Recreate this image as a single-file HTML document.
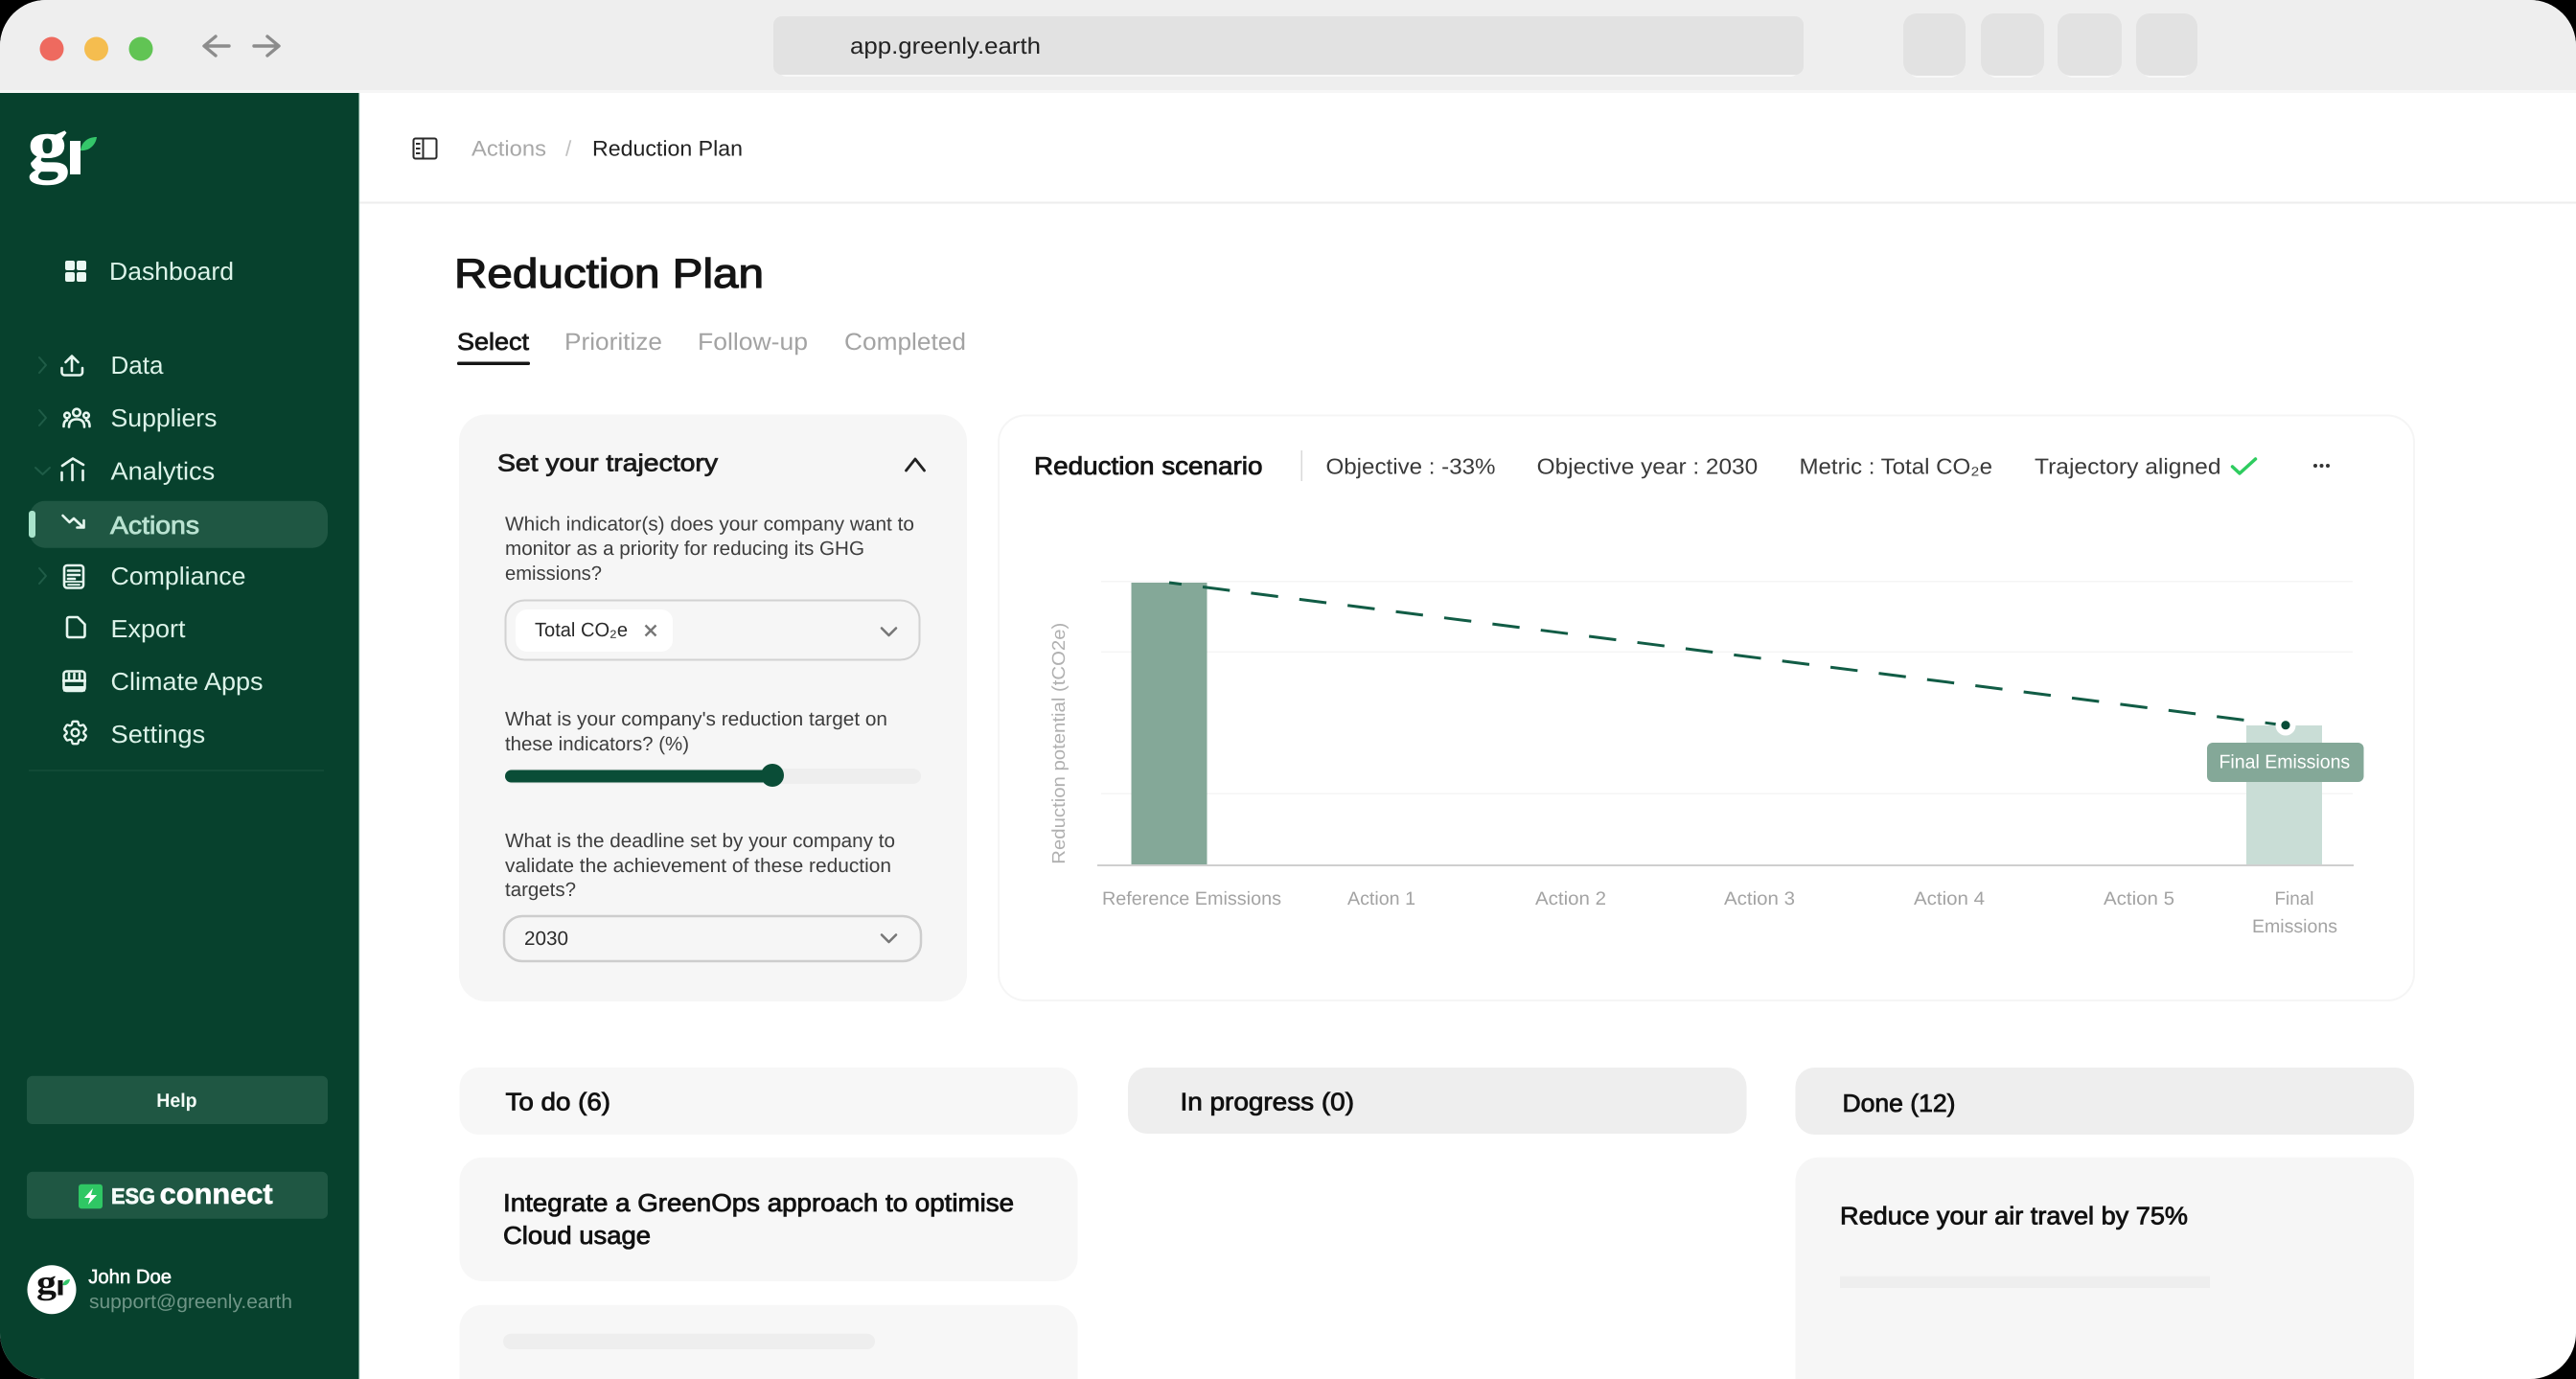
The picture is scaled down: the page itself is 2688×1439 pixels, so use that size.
<!DOCTYPE html>
<html lang="en">
<head>
<meta charset="utf-8">
<title>Reduction Plan</title>
<style>
html,body{margin:0;padding:0;background:#000;width:2688px;height:1439px;overflow:hidden}
svg{display:block;font-family:"Liberation Sans",Arial,sans-serif;text-rendering:geometricPrecision}
.nav{font-size:26px;fill:#dcf3e9}
.q{font-size:20.5px;fill:#3d3d3d}
.hd{font-size:23px;fill:#3a3a3a}
.xl{font-size:19.5px;fill:#a3a3a3}
.k{font-size:26px;fill:#111;stroke:#111;stroke-width:.8px}
.ic{fill:none;stroke:#e6f6ef;stroke-width:2.6;stroke-linecap:round;stroke-linejoin:round}
.chev{fill:none;stroke:#1f5c47;stroke-width:2;stroke-linecap:round;stroke-linejoin:round}
.sc{fill:none;stroke:#777;stroke-width:2.6;stroke-linecap:round;stroke-linejoin:round}
</style>
</head>
<body>
<svg width="2688" height="1439" viewBox="0 0 2688 1439" xmlns="http://www.w3.org/2000/svg">
<defs><clipPath id="win"><rect x="0" y="0" width="2688" height="1439" rx="48" ry="48"/></clipPath></defs>
<rect width="2688" height="1439" fill="#000"/>
<g clip-path="url(#win)">
<rect width="2688" height="1439" fill="#fff"/>

<!-- browser chrome -->
<rect width="2688" height="94" fill="#eeeeee"/>
<rect y="94" width="2688" height="3" fill="#f6f6f6"/>
<circle cx="54" cy="51" r="12.5" fill="#ee6a5f"/>
<circle cx="100.5" cy="51" r="12.5" fill="#f5bd4f"/>
<circle cx="147" cy="51" r="12.5" fill="#61c454"/>
<path d="M239 48H214M225 38L213 48L225 58" fill="none" stroke="#8c8c8c" stroke-width="3.4" stroke-linecap="round" stroke-linejoin="round"/>
<path d="M265 48H290M279 38L291 48L279 58" fill="none" stroke="#8c8c8c" stroke-width="3.4" stroke-linecap="round" stroke-linejoin="round"/>
<rect x="812" y="18" width="1065" height="62" rx="9" fill="#f8f8f8"/>
<rect x="807" y="17" width="1075" height="61" rx="9" fill="#e2e2e2"/>
<text x="887" y="56" font-size="24" fill="#222" textLength="199" lengthAdjust="spacingAndGlyphs">app.greenly.earth</text>
<rect x="1992" y="15" width="53" height="66" rx="10" fill="#f8f8f8"/>
<rect x="1986" y="14" width="65" height="65" rx="14" fill="#e2e2e2"/>
<rect x="2073" y="15" width="54" height="66" rx="10" fill="#f8f8f8"/>
<rect x="2067" y="14" width="66" height="65" rx="14" fill="#e2e2e2"/>
<rect x="2153" y="15" width="55" height="66" rx="10" fill="#f8f8f8"/>
<rect x="2147" y="14" width="67" height="65" rx="14" fill="#e2e2e2"/>
<rect x="2235" y="15" width="52" height="66" rx="10" fill="#f8f8f8"/>
<rect x="2229" y="14" width="64" height="65" rx="14" fill="#e2e2e2"/>

<!-- sidebar -->
<rect x="0" y="97" width="374.5" height="1342" fill="#07412d"/>
<rect x="374.5" y="97" width="1" height="1342" fill="#cfe8dd"/>

<!-- logo -->
<text x="29" y="176" font-family="'Liberation Serif',serif" font-weight="700" font-size="76" fill="#fff" stroke="#fff" stroke-width="1" textLength="42" lengthAdjust="spacingAndGlyphs">g</text>
<rect x="73" y="147" width="11" height="35" fill="#fff"/>
<path d="M84 157C85 148 92 143 101 143C100 151 93 158 84 157Z" fill="#34c66a"/>

<!-- nav -->
<rect x="68" y="272" width="10" height="10" rx="2" fill="#eaf8f2"/>
<rect x="80" y="272" width="10" height="10" rx="2" fill="#eaf8f2"/>
<rect x="68" y="284" width="10" height="10" rx="2" fill="#eaf8f2"/>
<rect x="80" y="284" width="10" height="10" rx="2" fill="#eaf8f2"/>
<text class="nav" x="114" y="292" textLength="130" lengthAdjust="spacingAndGlyphs">Dashboard</text>

<path class="chev" d="M41 373L48 381L41 389"/>
<path class="chev" d="M41 428L48 436L41 444"/>
<path class="chev" d="M37 488L44.500 495L52 488"/>
<path class="chev" d="M41 593L48 601L41 609"/>

<path class="ic" d="M75 387V372M68.500 378L75 371.500L81.500 378M64.500 384V388.500A3 3 0 0 0 67.500 391.500H83A3 3 0 0 0 86 388.500V384" stroke-width="2.8"/>
<text class="nav" x="115.500" y="390" textLength="55" lengthAdjust="spacingAndGlyphs">Data</text>

<g class="ic" stroke-width="2.1">
<circle cx="80" cy="430.500" r="3.800"/><circle cx="70" cy="433.500" r="2.800"/><circle cx="90" cy="433.500" r="2.800"/>
<path d="M72 445.500Q72 437.500 80 437.500Q88 437.500 88 445.500"/>
<path d="M66.500 445Q66.500 439 70 438.500M93.500 445Q93.500 439 90 438.500"/>
</g>
<text class="nav" x="115.500" y="445" textLength="111" lengthAdjust="spacingAndGlyphs">Suppliers</text>

<g class="ic" stroke-width="2.700">
<path d="M65 486L76 478.500L87 485"/>
<path d="M64.500 493V501M75.500 485V501M86.500 491V501"/>
</g>
<text class="nav" x="115.500" y="500.700" textLength="108.700" lengthAdjust="spacingAndGlyphs">Analytics</text>

<rect x="31" y="522.700" width="311" height="49" rx="16" fill="#1f5743"/>
<rect x="30" y="533" width="7" height="28" rx="3" fill="#a8e3cb"/>
<path class="ic" d="M65.500 538L72.500 545L77 541L86 549.500M87.500 543V550.500H80.500" stroke-width="2.800"/>
<text x="115" y="557" font-size="26" fill="#b9e2d1" stroke="#b9e2d1" stroke-width=".8" textLength="93" lengthAdjust="spacingAndGlyphs">Actions</text>

<g class="ic" stroke-width="2.400">
<rect x="67" y="590" width="20" height="23.500" rx="3"/>
<path d="M71 595.500H83M71 600H83M71 604H78"/>
<path d="M67 607H87M71 610.200H83" stroke-width="1.800"/>
</g>
<text class="nav" x="115.500" y="610" textLength="141" lengthAdjust="spacingAndGlyphs">Compliance</text>

<path class="ic" d="M70 646A2 2 0 0 1 72 644H81L88.500 651.500V663A2 2 0 0 1 86.500 665H72A2 2 0 0 1 70 663Z"/>
<text class="nav" x="115.500" y="665" textLength="78" lengthAdjust="spacingAndGlyphs">Export</text>

<g class="ic" stroke-width="2.600">
<rect x="66.500" y="700.500" width="22" height="20.500" rx="3"/>
<path d="M72 703V708M77.500 703V708M83 703V708"/>
</g>
<rect x="65" y="709" width="25" height="2.800" fill="#e6f6ef"/>
<rect x="66" y="716" width="23" height="5.500" fill="#e6f6ef"/>
<text class="nav" x="115.500" y="720" textLength="159" lengthAdjust="spacingAndGlyphs">Climate Apps</text>

<g transform="translate(62.900 748.900) scale(1.300)" fill="none" stroke="#e6f6ef" stroke-width="1.800" stroke-linejoin="round">
<path d="M9.594 3.94c.09-.542.56-.94 1.11-.94h2.593c.55 0 1.02.398 1.11.94l.213 1.281c.063.374.313.686.645.87.074.04.147.083.22.127.325.196.72.257 1.075.124l1.217-.456a1.125 1.125 0 011.37.49l1.296 2.247a1.125 1.125 0 01-.26 1.431l-1.003.827c-.293.24-.438.613-.431.992a6.759 6.759 0 010 .255c-.007.378.138.75.43.99l1.005.828c.424.35.534.954.26 1.43l-1.298 2.247a1.125 1.125 0 01-1.369.491l-1.217-.456c-.355-.133-.75-.072-1.076.124a6.57 6.57 0 01-.22.128c-.331.183-.581.495-.644.869l-.213 1.28c-.09.543-.56.941-1.11.941h-2.594c-.55 0-1.02-.398-1.11-.94l-.213-1.281c-.062-.374-.312-.686-.644-.87a6.52 6.52 0 01-.22-.127c-.325-.196-.72-.257-1.076-.124l-1.217.456a1.125 1.125 0 01-1.369-.49l-1.297-2.247a1.125 1.125 0 01.26-1.431l1.004-.827c.292-.24.437-.613.43-.992a6.932 6.932 0 010-.255c.007-.378-.138-.75-.43-.99l-1.004-.828a1.125 1.125 0 01-.26-1.43l1.297-2.247a1.125 1.125 0 011.37-.491l1.216.456c.356.133.751.072 1.076-.124.072-.044.146-.087.22-.128.332-.183.582-.495.644-.869l.214-1.281z"/>
<circle cx="12" cy="12" r="3"/>
</g>
<text class="nav" x="115.500" y="775" textLength="98.700" lengthAdjust="spacingAndGlyphs">Settings</text>

<rect x="30" y="803" width="308" height="2" fill="#114a36"/>

<!-- help -->
<rect x="28" y="1122.700" width="314" height="50.300" rx="6" fill="#1f5743"/>
<text x="163.300" y="1155" font-size="20" font-weight="700" fill="#f2faf6" textLength="42.300" lengthAdjust="spacingAndGlyphs">Help</text>

<!-- esg -->
<rect x="28" y="1222.700" width="314" height="49" rx="6" fill="#1f5743"/>
<rect x="82" y="1235.700" width="25" height="25.500" rx="3" fill="#2fc764"/>
<polygon points="97,1240 88,1250 94,1250 92,1257 101,1247 95,1247" fill="#fff"/>
<text x="116" y="1256" font-size="23" font-weight="700" fill="#f4fbf8" stroke="#f4fbf8" stroke-width=".7" textLength="46" lengthAdjust="spacingAndGlyphs">ESG</text>
<text x="166.700" y="1256" font-size="30" font-weight="700" fill="#fff" stroke="#fff" stroke-width=".6" textLength="118" lengthAdjust="spacingAndGlyphs">connect</text>

<!-- user -->
<circle cx="54" cy="1345.700" r="25.500" fill="#fff"/>
<text x="38" y="1349.500" font-family="'Liberation Serif',serif" font-weight="700" font-size="35" fill="#111" textLength="21" lengthAdjust="spacingAndGlyphs">g</text>
<rect x="60.500" y="1336" width="5" height="15.500" fill="#111"/>
<path d="M65.500 1341C66 1337 69 1335 73 1335C72.500 1339 69.500 1342 65.500 1341Z" fill="#34c66a"/>
<text x="92.300" y="1339" font-size="20.500" fill="#fff" stroke="#fff" stroke-width=".55" textLength="86.700" lengthAdjust="spacingAndGlyphs">John Doe</text>
<text x="93" y="1365" font-size="20.500" fill="#6f9687" textLength="212" lengthAdjust="spacingAndGlyphs">support@greenly.earth</text>

<!-- top bar -->
<rect x="375.500" y="210.500" width="2313" height="2" fill="#ededed"/>
<g fill="none" stroke="#2a2a2a" stroke-width="2">
<rect x="431.500" y="144.500" width="24" height="21" rx="2"/>
<path d="M441.500 144.500V165.500"/>
<path d="M434 150H438.500M434 155H438.500M434 160H438.500"/>
</g>
<text x="492" y="162.500" font-size="22.500" fill="#a8a8a8" textLength="78" lengthAdjust="spacingAndGlyphs">Actions</text>
<text x="590" y="162.500" font-size="22.500" fill="#c0c0c0">/</text>
<text x="618" y="162.500" font-size="22.500" fill="#222" textLength="157" lengthAdjust="spacingAndGlyphs">Reduction Plan</text>

<!-- title -->
<text x="474" y="300" font-size="43" fill="#141414" stroke="#141414" stroke-width="1.2" textLength="323" lengthAdjust="spacingAndGlyphs">Reduction Plan</text>

<!-- tabs -->
<text x="477" y="365" font-size="25" fill="#161616" stroke="#161616" stroke-width=".75" textLength="75" lengthAdjust="spacingAndGlyphs">Select</text>
<rect x="477" y="377.500" width="76" height="3.500" rx="1.500" fill="#161616"/>
<text x="589" y="365" font-size="25" fill="#a3a3a3" textLength="102" lengthAdjust="spacingAndGlyphs">Prioritize</text>
<text x="728" y="365" font-size="25" fill="#a3a3a3" textLength="115" lengthAdjust="spacingAndGlyphs">Follow-up</text>
<text x="881" y="365" font-size="25" fill="#a3a3a3" textLength="127" lengthAdjust="spacingAndGlyphs">Completed</text>

<!-- left panel -->
<rect x="479" y="432.500" width="530" height="612.500" rx="28" fill="#f6f6f6"/>
<text x="519" y="491.700" font-size="25" fill="#1a1a1a" stroke="#1a1a1a" stroke-width=".8" textLength="230" lengthAdjust="spacingAndGlyphs">Set your trajectory</text>
<path d="M945.500 491L955 479L964.500 491" fill="none" stroke="#222" stroke-width="2.800" stroke-linecap="round" stroke-linejoin="round"/>

<text class="q" x="527" y="553.600" textLength="427" lengthAdjust="spacingAndGlyphs">Which indicator(s) does your company want to</text>
<text class="q" x="527" y="579" textLength="375" lengthAdjust="spacingAndGlyphs">monitor as a priority for reducing its GHG</text>
<text class="q" x="527" y="605" textLength="101" lengthAdjust="spacingAndGlyphs">emissions?</text>

<rect x="527.500" y="626.500" width="432" height="62" rx="20" fill="#f6f6f6" stroke="#d2d2d2" stroke-width="2"/>
<rect x="538" y="636" width="164" height="44" rx="12" fill="#fff"/>
<text x="558" y="664" font-size="20.500" fill="#2a2a2a" textLength="97" lengthAdjust="spacingAndGlyphs">Total CO₂e</text>
<path d="M673.500 652.500L684.500 663.500M684.500 652.500L673.500 663.500" fill="none" stroke="#777" stroke-width="2.400"/>
<path class="sc" d="M920 655.500L927.500 663L935 655.500"/>

<text class="q" x="527" y="757" textLength="399" lengthAdjust="spacingAndGlyphs">What is your company's reduction target on</text>
<text class="q" x="527" y="783" textLength="192" lengthAdjust="spacingAndGlyphs">these indicators? (%)</text>

<rect x="527" y="802" width="434" height="16" rx="8" fill="#eeeeee"/>
<rect x="527" y="803.500" width="285" height="13" rx="6.500" fill="#0a4d37"/>
<circle cx="806" cy="809" r="12" fill="#0a4d37"/>

<text class="q" x="527" y="884" textLength="407" lengthAdjust="spacingAndGlyphs">What is the deadline set by your company to</text>
<text class="q" x="527" y="910" textLength="403" lengthAdjust="spacingAndGlyphs">validate the achievement of these reduction</text>
<text class="q" x="527" y="935" textLength="74" lengthAdjust="spacingAndGlyphs">targets?</text>

<rect x="526" y="956" width="435" height="47" rx="19" fill="#f6f6f6" stroke="#cdcdcd" stroke-width="2.500"/>
<text x="547" y="986" font-size="20.500" fill="#2a2a2a" textLength="46" lengthAdjust="spacingAndGlyphs">2030</text>
<path class="sc" d="M920 975.500L927.500 983L935 975.500"/>

<!-- right panel -->
<rect x="1042" y="433.500" width="1477" height="610.500" rx="28" fill="#fff" stroke="#f5f5f5" stroke-width="2"/>
<text x="1079" y="495" font-size="26" fill="#141414" stroke="#141414" stroke-width=".8" textLength="238.500" lengthAdjust="spacingAndGlyphs">Reduction scenario</text>
<rect x="1357.500" y="470" width="1.500" height="32" fill="#d9d9d9"/>
<text class="hd" x="1383.500" y="494.500" textLength="177" lengthAdjust="spacingAndGlyphs">Objective : -33%</text>
<text class="hd" x="1603.600" y="494.500" textLength="230.600" lengthAdjust="spacingAndGlyphs">Objective year : 2030</text>
<text class="hd" x="1877.500" y="494.500" textLength="201.500" lengthAdjust="spacingAndGlyphs">Metric : Total CO₂e</text>
<text class="hd" x="2123" y="494.500" textLength="194.500" lengthAdjust="spacingAndGlyphs">Trajectory aligned</text>
<path d="M2329.500 487L2337 494L2353.500 479" fill="none" stroke="#2ecc5f" stroke-width="3.500" stroke-linecap="round" stroke-linejoin="round"/>
<circle cx="2416" cy="486" r="2" fill="#333"/><circle cx="2422.500" cy="486" r="2" fill="#333"/><circle cx="2429" cy="486" r="2" fill="#333"/>

<!-- chart -->
<rect x="1149" y="606" width="1306" height="1.500" fill="#f5f5f5"/>
<rect x="1149" y="679.500" width="1306" height="1.500" fill="#f5f5f5"/>
<rect x="1149" y="827.500" width="1306" height="1.500" fill="#f5f5f5"/>
<rect x="1180.500" y="608" width="79" height="295" fill="#84a898"/>
<rect x="2344" y="757" width="79" height="146" fill="#c9ddd6"/>
<rect x="1145" y="902" width="1311" height="2" fill="#cfcfcf"/>
<text transform="rotate(-90 1111 901.700)" x="1111" y="901.700" font-size="19" fill="#b0b0b0" textLength="252" lengthAdjust="spacingAndGlyphs">Reduction potential (tCO2e)</text>

<path d="M1220 608L2375.500 755.700" fill="none" stroke="#115c45" stroke-width="3" stroke-dasharray="28.500 22.300" stroke-dashoffset="15.500"/>
<circle cx="2385" cy="757" r="10.500" fill="#fff"/>
<circle cx="2385" cy="756.700" r="4.600" fill="#084c37"/>

<rect x="2303" y="775" width="163.500" height="41" rx="6" fill="#84a898"/>
<text x="2315.500" y="801.700" font-size="20" fill="#fff" textLength="136.700" lengthAdjust="spacingAndGlyphs">Final Emissions</text>

<text class="xl" x="1150" y="944" textLength="187" lengthAdjust="spacingAndGlyphs">Reference Emissions</text>
<text class="xl" x="1406" y="944" textLength="71" lengthAdjust="spacingAndGlyphs">Action 1</text>
<text class="xl" x="1602" y="944" textLength="74" lengthAdjust="spacingAndGlyphs">Action 2</text>
<text class="xl" x="1799" y="944" textLength="74" lengthAdjust="spacingAndGlyphs">Action 3</text>
<text class="xl" x="1997" y="944" textLength="74" lengthAdjust="spacingAndGlyphs">Action 4</text>
<text class="xl" x="2195" y="944" textLength="74" lengthAdjust="spacingAndGlyphs">Action 5</text>
<text class="xl" x="2373.500" y="944" textLength="41" lengthAdjust="spacingAndGlyphs">Final</text>
<text class="xl" x="2350" y="973" textLength="89" lengthAdjust="spacingAndGlyphs">Emissions</text>

<!-- kanban -->
<rect x="479.500" y="1114" width="645" height="70" rx="20" fill="#f7f7f7"/>
<text class="k" x="527.500" y="1158.300" textLength="109.500" lengthAdjust="spacingAndGlyphs">To do (6)</text>
<rect x="1177" y="1114" width="645.500" height="69" rx="20" fill="#eeeeee"/>
<text class="k" x="1231.500" y="1158.300" textLength="181.500" lengthAdjust="spacingAndGlyphs">In progress (0)</text>
<rect x="1873.500" y="1114" width="645.500" height="70" rx="20" fill="#eeeeee"/>
<text class="k" x="1922.500" y="1160" textLength="118" lengthAdjust="spacingAndGlyphs">Done (12)</text>

<rect x="479.500" y="1207.700" width="645" height="129.300" rx="24" fill="#f7f7f7"/>
<text class="k" x="525" y="1264" textLength="533" lengthAdjust="spacingAndGlyphs">Integrate a GreenOps approach to optimise</text>
<text class="k" x="525" y="1298" textLength="154" lengthAdjust="spacingAndGlyphs">Cloud usage</text>

<rect x="479.500" y="1361.700" width="645" height="120" rx="24" fill="#f7f7f7"/>
<rect x="525" y="1391.700" width="388" height="16.300" rx="8" fill="#eeeeee"/>

<rect x="1873.500" y="1207.700" width="645.500" height="280" rx="24" fill="#f6f6f6"/>
<text class="k" x="1920" y="1277.500" textLength="363" lengthAdjust="spacingAndGlyphs">Reduce your air travel by 75%</text>
<rect x="1920" y="1331.700" width="386" height="12.300" fill="#eeeeee"/>
</g>
</svg>
</body>
</html>
